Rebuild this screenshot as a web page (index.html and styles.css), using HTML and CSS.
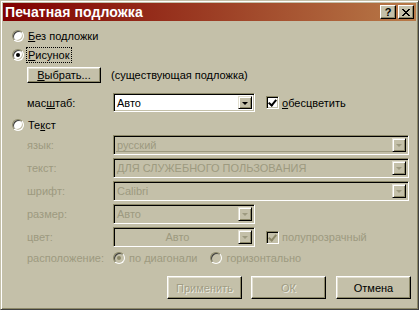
FILE: index.html
```html
<!DOCTYPE html>
<html lang="ru">
<head>
  <meta charset="UTF-8" />
  <title>Печатная подложка</title>
  <link rel="stylesheet" href="styles.css">
</head>
<body>

<div class="dlg">
  <div class="title">
    <span class="caption">Печатная подложка</span>
    <span class="tbtn help">?</span>
    <span class="tbtn close">
      <svg width="8" height="7" viewBox="0 0 8 7"><path d="M0 0h2v1h1v1h2v-1h1v-1h2v1h-1v1h-1v1h-1v1h1v1h1v1h1v1h-2v-1h-1v-1h-2v1h-1v1h-2v-1h1v-1h1v-1h1v-1h-1v-1h-1v-1h-1z" fill="#000"/></svg>
    </span>
  </div>

  <div class="content">
    <div class="row r-none">
      <span class="radio"></span><span class="rtext"><u>Б</u>ез подложки</span>
    </div>
    <div class="row r-pic">
      <span class="radio on"></span><span class="rtext focus"><u>Р</u>исунок</span>
    </div>
    <div class="row r-choose">
      <span class="btn small"><u>В</u>ыбрать...</span>
      <span class="note">(существующая подложка)</span>
    </div>
    <div class="row r-scale">
      <span class="lbl">мас<u>ш</u>таб:</span>
      <span class="combo short"><span class="val">Авто</span><span class="drop"><i class="arrow"></i></span></span>
      <span class="check on"></span><span class="ctext"><u>о</u>бесцветить</span>
    </div>
    <div class="row r-text">
      <span class="radio"></span><span class="rtext">Те<u>к</u>ст</span>
    </div>

    <div class="row field f1">
      <span class="lbl off">язык:</span>
      <span class="combo wide off line"><span class="val">русский</span><span class="drop"><i class="arrow"></i></span></span>
    </div>
    <div class="row field">
      <span class="lbl off">текст:</span>
      <span class="combo wide off"><span class="val">ДЛЯ СЛУЖЕБНОГО ПОЛЬЗОВАНИЯ</span><span class="drop"><i class="arrow"></i></span></span>
    </div>
    <div class="row field">
      <span class="lbl off">шрифт:</span>
      <span class="combo wide off"><span class="val">Calibri</span><span class="drop"><i class="arrow"></i></span></span>
    </div>
    <div class="row field">
      <span class="lbl off">размер:</span>
      <span class="combo short off"><span class="val">Авто</span><span class="drop"><i class="arrow"></i></span></span>
    </div>
    <div class="row field">
      <span class="lbl off">цвет:</span>
      <span class="combo short off"><span class="val center">Авто</span><span class="drop"><i class="arrow"></i></span></span>
      <span class="check on off"></span><span class="ctext off">полупрозрачный</span>
    </div>
    <div class="row r-layout">
      <span class="lbl off">расположение:</span>
      <span class="radio on off"></span><span class="rtext off">по диагонали</span>
      <span class="radio off gap"></span><span class="rtext off">горизонтально</span>
    </div>

    <div class="buttons">
      <span class="btn off">Применить</span>
      <span class="btn off">ОК</span>
      <span class="btn">Отмена</span>
    </div>
  </div>
</div>

</body>
</html>
```

FILE: styles.css
```css
body { margin: 0; background: #c4c0a9; font-family: "Liberation Sans", Arial, sans-serif; font-size: 11px; color: #000; }
u { text-decoration: underline; text-underline-offset: 1px; }

.dlg {
  width: 419px; height: 310px; box-sizing: border-box; padding: 2px;
  border: 1px solid; border-color: #c4c0a9 #404040 #404040 #c4c0a9;
  box-shadow: inset 1px 1px 0 #fff, inset -1px -1px 0 #8c8868;
  background: #c4c0a9;
}
.title {
  height: 18px; display: flex; align-items: center; padding: 0 2px 0 2px;
  background: linear-gradient(to right, #800000, #b87a48);
}
.caption { flex: 1; color: #fff; font-weight: bold; font-size: 14px; letter-spacing: 0.1px; }
.tbtn {
  width: 14px; height: 12px; margin-left: 0; display: flex; align-items: center; justify-content: center;
  background: #c4c0a9; border: 1px solid; border-color: #fff #000 #000 #fff;
  box-shadow: inset -1px -1px 0 #8c8868; font-weight: bold; font-size: 11px;
}
.tbtn.help { margin-right: 2px; }

.content { padding-left: 9px; }
.row { display: flex; align-items: center; }
.r-none { margin-top: 8px; height: 14px; }
.r-pic { margin-top: 4px; height: 16px; }
.r-choose { margin-top: 4px; height: 16px; padding-left: 15px; }
.r-scale { margin-top: 10px; height: 19px; padding-left: 15px; }
.r-text { margin-top: 6px; height: 14px; }
.field { margin-top: 3px; height: 20px; padding-left: 15px; }
.f1 { margin-top: 3px; }
.field + .field { margin-top: 3px; }
.r-layout { margin-top: 4px; height: 14px; padding-left: 15px; }

.radio {
  width: 10px; height: 10px; border-radius: 50%; position: relative; flex: none;
  border: 1px solid; border-color: #8c8868 #fff #fff #8c8868; background: #fff;
  box-shadow: inset 1px 1px 0 #404040, inset -1px -1px 0 #c4c0a9;
}
.radio.on::after {
  content: ""; position: absolute; left: 3px; top: 3px; width: 4px; height: 4px; border-radius: 50%; background: #000;
}
.radio.off { background: #c4c0a9; }
.radio.off::after { background: #8c8868; }
.rtext { margin-left: 3px; padding: 1px 1px; }
.rtext.focus { outline: 1px dotted #000; outline-offset: 0; }
.radio.gap { margin-left: 12px; }

.lbl { width: 86px; flex: none; }
.off { color: #9d9a80; }

.btn {
  display: flex; align-items: center; justify-content: center; box-sizing: border-box;
  width: 75px; height: 23px; background: #c4c0a9;
  border: 1px solid; border-color: #fff #000 #000 #fff;
  box-shadow: inset -1px -1px 0 #8c8868, inset 1px 1px 0 #e2dfd0;
}
.btn.small { width: 74px; height: 16px; }
.btn.off { color: #a09d84; text-shadow: 1px 1px 0 #ecebe2; }
.note { margin-left: 10px; }

.combo {
  display: flex; align-items: center; box-sizing: border-box; height: 100%; position: relative;
  border: 1px solid; border-color: #8c8868 #fff #fff #8c8868; background: #fff;
  box-shadow: inset 1px 1px 0 #000, inset -1px -1px 0 #c4c0a9;
  padding: 2px 2px 2px 2px;
}
.combo.short { width: 142px; }
.combo.wide { width: 296px; }
.combo.off { background: #c4c0a9; }
.combo.off .val { color: #9d9a80; }
.combo.line::after { content: ""; position: absolute; left: 2px; right: 16px; bottom: 2px; height: 1px; background: #9d9a80; }
.val { flex: 1; padding-left: 1px; white-space: nowrap; overflow: hidden; }
.val.center { text-align: center; }
.drop {
  width: 14px; height: 100%; box-sizing: border-box; flex: none; background: #c4c0a9;
  display: flex; align-items: center; justify-content: center;
  border: 1px solid; border-color: #e2dfd0 #000 #000 #e2dfd0;
  box-shadow: inset 1px 1px 0 #fff, inset -1px -1px 0 #8c8868;
}
.arrow { width: 0; height: 0; border-left: 3px solid transparent; border-right: 3px solid transparent; border-top: 3px solid #000; margin-top: 1px; }
.combo.off .arrow { border-top-color: #9d9a80; }

.check {
  width: 11px; height: 11px; flex: none; margin-left: 11px; position: relative;
  border: 1px solid; border-color: #8c8868 #fff #fff #8c8868; background: #fff;
  box-shadow: inset 1px 1px 0 #000, inset -1px -1px 0 #c4c0a9;
}
.check.on::after {
  content: ""; position: absolute; left: 3px; top: 1px; width: 3px; height: 6px;
  border: solid #000; border-width: 0 2px 2px 0; transform: rotate(40deg);
}
.check.off { background: #c4c0a9; }
.check.off::after { border-color: #8c8868; }
.ctext { margin-left: 3px; }

.buttons { display: flex; justify-content: flex-end; gap: 10px; margin-top: 11px; padding-right: 5px; }
.buttons .btn:first-child { margin-right: -1px; }
```
